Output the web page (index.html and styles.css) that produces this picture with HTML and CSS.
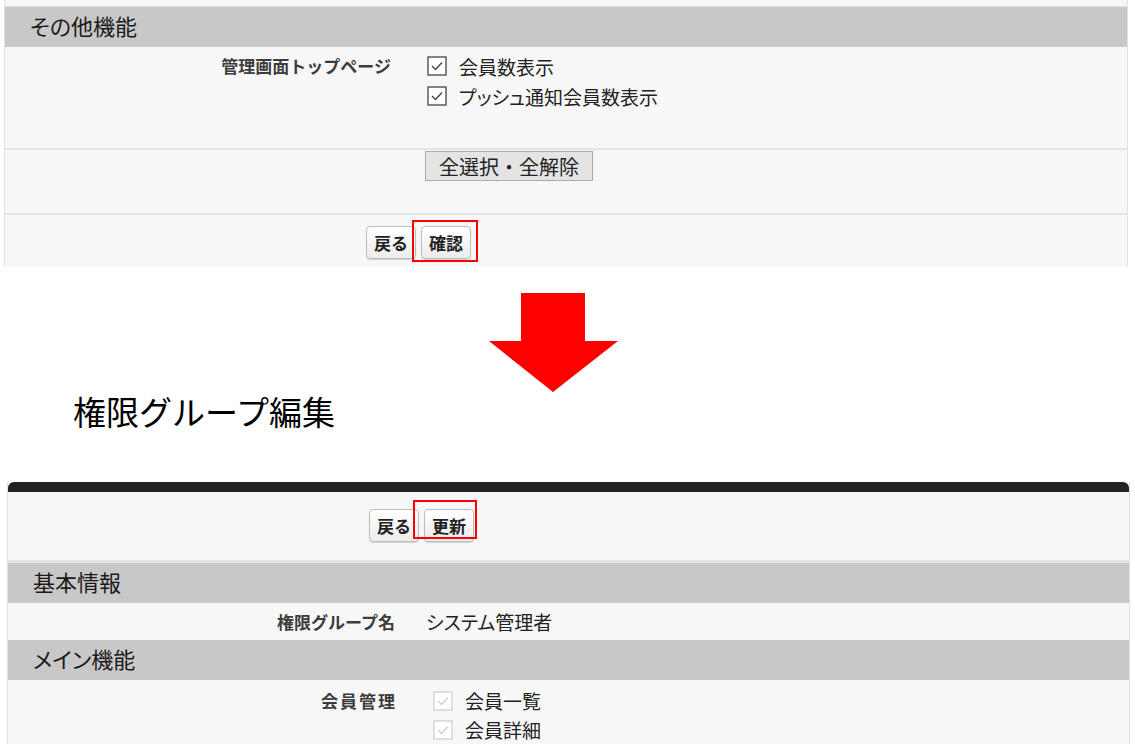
FILE: index.html
```html
<!DOCTYPE html>
<html lang="ja">
<head>
    <meta charset="UTF-8">
    <meta name="viewport" content="width=device-width, initial-scale=1.0">
    <title>権限グループ編集</title>
    <link rel="stylesheet" href="styles.css">
</head>
<body>

    <!-- before: confirm screen -->
    <div class="panel panel-top">
        <div class="panel-tail"></div>
        <div class="section-head">その他機能</div>

        <div class="field field-tall">
            <div class="field-label">管理画面トップページ</div>
            <div class="check-list">
                <label class="check">
                    <svg class="box" viewBox="0 0 20 20"><rect x="1" y="1" width="18" height="18"/><polyline points="5,10 8.5,13.5 15,6.5"/></svg>
                    会員数表示
                </label>
                <label class="check">
                    <svg class="box" viewBox="0 0 20 20"><rect x="1" y="1" width="18" height="18"/><polyline points="5,10 8.5,13.5 15,6.5"/></svg>
                    プッシュ通知会員数表示
                </label>
            </div>
        </div>

        <div class="row-toggle">
            <button class="btn-flat">全選択・全解除</button>
        </div>

        <div class="row-actions row-actions-top">
            <button class="btn">戻る</button>
            <span class="marked marked-top"><button class="btn">確認</button></span>
        </div>
    </div>

    <div class="arrow">
        <svg width="129" height="99" viewBox="0 0 129 99"><polygon points="32,0 96,0 96,48 129,48 64,99 0,48 32,48"/></svg>
    </div>

    <!-- after: edit screen -->
    <h1 class="page-title">権限グループ編集</h1>

    <div class="panel panel-bottom">
        <div class="panel-bar"></div>

        <div class="row-actions row-actions-bottom">
            <button class="btn">戻る</button>
            <span class="marked marked-bottom"><button class="btn">更新</button></span>
        </div>

        <div class="section-head">基本情報</div>
        <div class="field field-short">
            <div class="field-label">権限グループ名</div>
            <div class="field-value">システム管理者</div>
        </div>

        <div class="section-head">メイン機能</div>
        <div class="field field-open">
            <div class="field-label label-spaced">会員管理</div>
            <div class="check-list check-list-off">
                <label class="check">
                    <svg class="box" viewBox="0 0 20 20"><rect x="1" y="1" width="18" height="18"/><polyline points="5,10 8.5,13.5 15,6.5"/></svg>
                    会員一覧
                </label>
                <label class="check">
                    <svg class="box" viewBox="0 0 20 20"><rect x="1" y="1" width="18" height="18"/><polyline points="5,10 8.5,13.5 15,6.5"/></svg>
                    会員詳細
                </label>
            </div>
        </div>
    </div>

</body>
</html>
```

FILE: styles.css
```css
body {
    margin: 0;
    background: #fff;
    font-family: "Noto Sans CJK JP", "Noto Sans", sans-serif;
    color: #222;
    font-feature-settings: "palt";
}
.panel {
    background: #f7f7f7;
    border-left: 1px solid #e2e2e2;
    border-right: 1px solid #e2e2e2;
}
.panel-top {
    margin-left: 4px;
    width: 1122px;
}
.panel-bottom {
    margin-left: 7px;
    width: 1121px;
    height: 262px;
    overflow: hidden;
}
.panel-tail {
    height: 6px;
    border-bottom: 1px solid #e2e2e2;
}
.panel-bar {
    height: 10px;
    background: #222;
    border-radius: 6px 6px 0 0;
}
.section-head {
    height: 40px;
    line-height: 37px;
    background: #c8c8c8;
    padding-left: 25px;
    box-sizing: border-box;
    padding-bottom: 3px;
    font-size: 22px;
    color: #1a1a1a;
}
/* label / value rows */
.field {
    display: grid;
    grid-template-columns: 386px 1fr;
    column-gap: 36px;
}
.panel-bottom .field {
    grid-template-columns: 387px 1fr;
    column-gap: 31px;
}
.field-tall {
    padding-top: 4px;
    box-sizing: border-box;
    border-bottom: 2px solid #e4e4e4;
    height: 103px;
}
.field-short {
    height: 37px;
    align-items: center;
}
.field-open {
    padding-top: 6px;
}
.field-label {
    text-align: right;
    font-size: 17px;
    font-weight: bold;
    line-height: 24px;
    padding-top: 3px;
    color: #3c3c3c;
    font-feature-settings: normal;
}
.field-short .field-label {
    line-height: 37px;
    padding-top: 0;
}
.label-spaced {
    letter-spacing: 2px;
    margin-right: -2px;
}
.field-value {
    font-size: 19px;
    line-height: 37px;
}
.check-list {
    display: flex;
    flex-direction: column;
}
.check-list-off {
    margin-left: 7px;
}
.check {
    display: flex;
    align-items: center;
    gap: 12px;
    height: 30px;
    font-size: 19px;
}
.box {
    width: 20px;
    height: 20px;
    fill: #fff;
    stroke: #444;
    stroke-width: 1.3;
}
.box polyline {
    fill: none;
    stroke: #444;
    stroke-width: 1.4;
}
.check-list-off .box,
.check-list-off .box polyline {
    stroke: #cfcfcf;
}
.check-list-off .check {
    height: 29px;
}
/* buttons */
.row-toggle {
    padding: 1px 0 0 420px;
    box-sizing: border-box;
    border-bottom: 2px solid #e4e4e4;
    height: 65px;
}
.btn-flat {
    font-family: inherit;
    font-size: 20px;
    height: 30px;
    width: 168px;
    padding: 0;
    background: #e4e4e4;
    border: 1px solid #aaa;
    color: #222;
}
.row-actions {
    display: flex;
    gap: 5px;
    align-items: flex-start;
}
.row-actions-top {
    height: 52px;
    padding: 11px 0 0 361px;
    box-sizing: border-box;
}
.row-actions-bottom {
    height: 71px;
    padding: 17px 0 0 361px;
    box-sizing: border-box;
    border-bottom: 3px solid #e4e4e4;
}
.btn {
    font-family: inherit;
    font-size: 17px;
    font-weight: bold;
    height: 33px;
    padding: 0 7px;
    color: #222;
    background: linear-gradient(#fff, #ececec);
    border: 1px solid #bdbdbd;
    border-radius: 4px;
    box-shadow: 0 1px 1px rgba(0, 0, 0, 0.15);
}
.marked {
    position: relative;
    display: inline-block;
}
.marked .btn {
    display: block;
}
.marked::after {
    content: "";
    position: absolute;
    border: 2px solid #f00;
}
.marked-top::after {
    top: -6px;
    bottom: -3px;
    left: -9px;
    right: -7px;
}
.marked-bottom::after {
    top: -9px;
    bottom: 3px;
    left: -11px;
    right: -3px;
}
/* arrow and heading */
.arrow {
    margin: 26px 0 0 489px;
}
.arrow svg {
    display: block;
    fill: #f00;
}
.page-title {
    margin: -1px 0 51px 73px;
    font-size: 33px;
    font-weight: normal;
    line-height: 40px;
    color: #000;
    font-feature-settings: normal;
}
```
